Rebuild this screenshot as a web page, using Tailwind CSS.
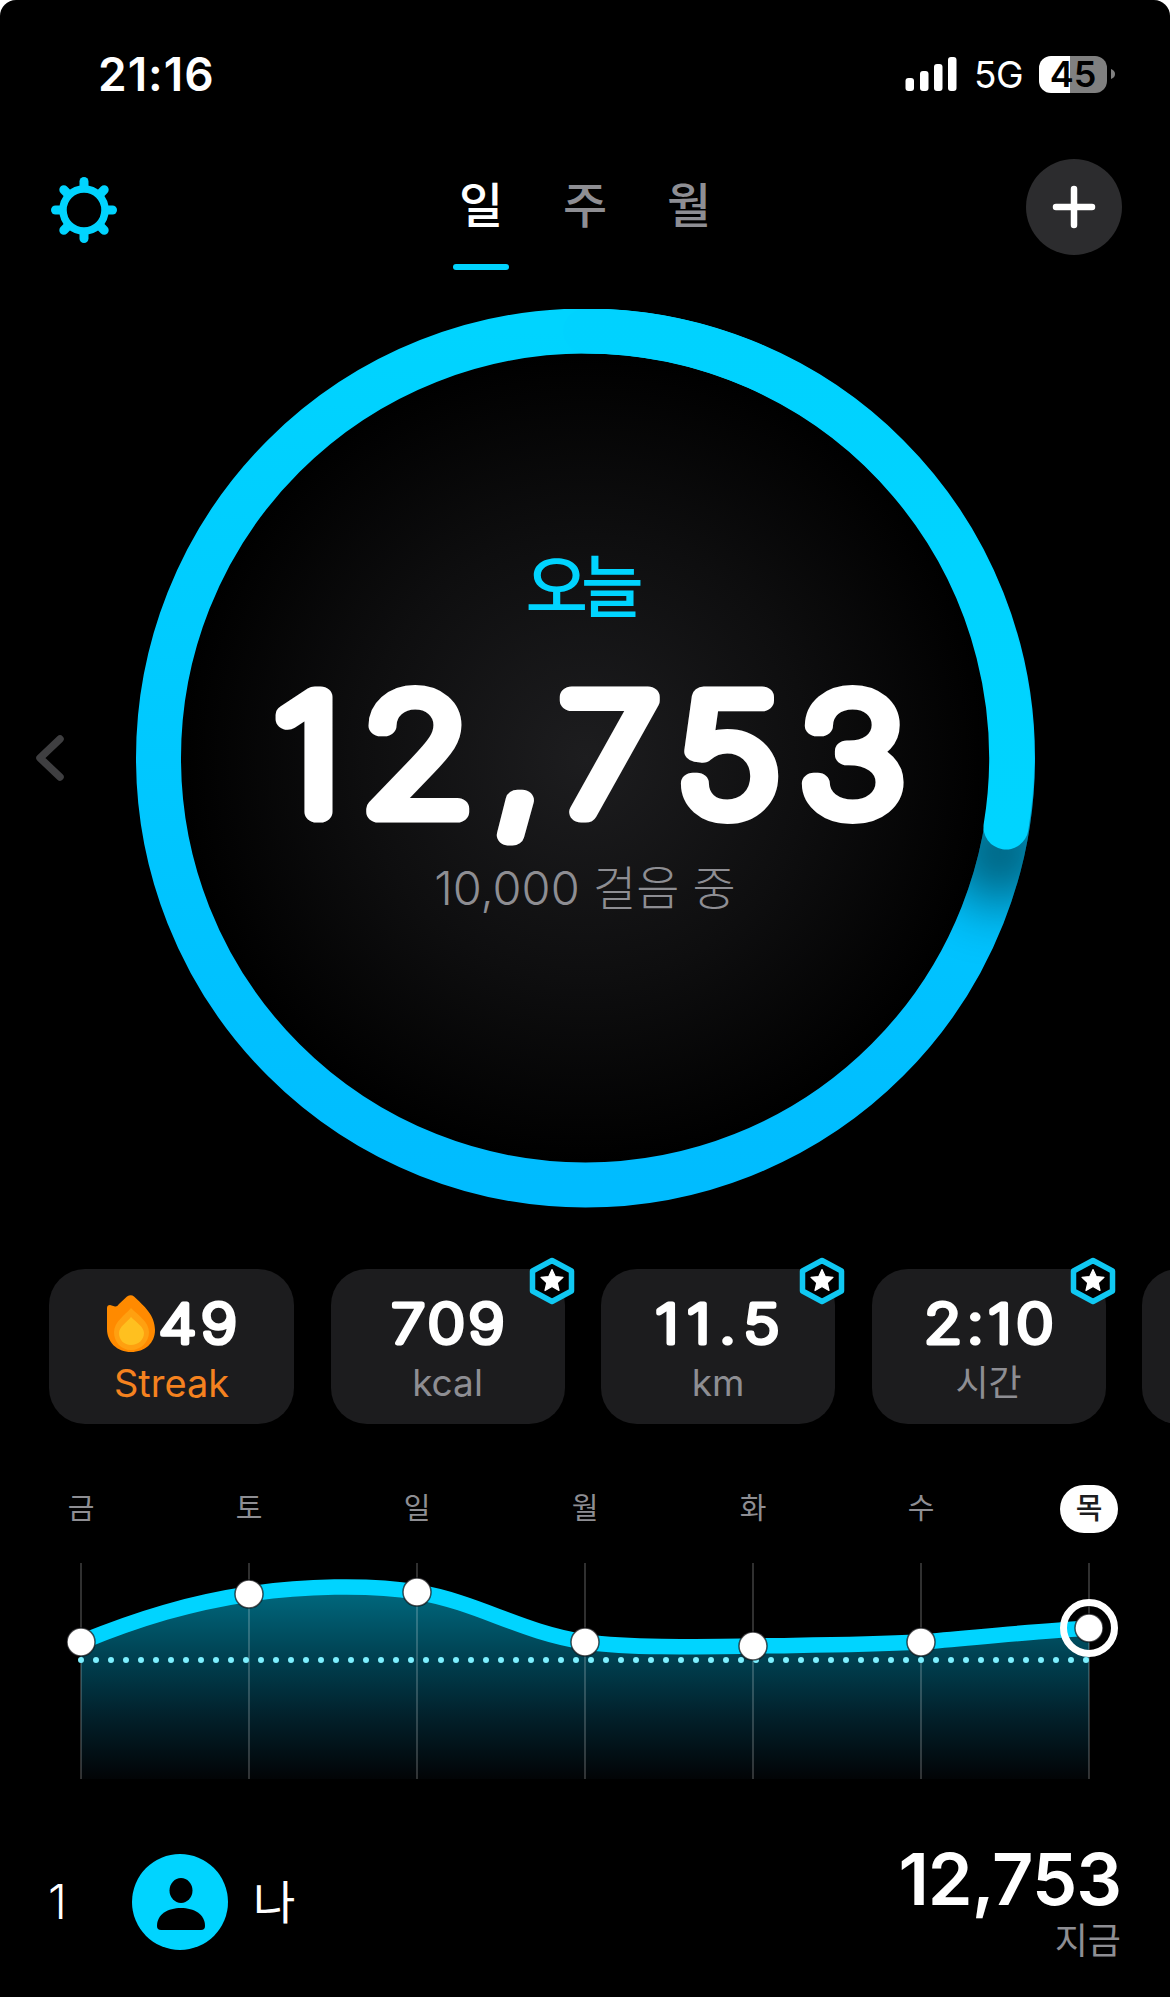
<!DOCTYPE html>
<html lang="ko">
<head>
<meta charset="utf-8">
<script src="https://cdn.jsdelivr.net/npm/@tailwindcss/browser@4"></script>
<title>걸음</title>
</head>
<body class="bg-white">
<div class="w-[1170px] h-[1997px] overflow-hidden bg-black text-white rounded-t-[16px] font-['Inter','Noto_Sans_CJK_KR',sans-serif]">

  <!-- status bar -->
  <div class="h-[148px] flex items-center justify-between pl-[98px] pr-[55px]">
    <div class="text-[46px] font-semibold leading-none tracking-[1px]">21:16</div>
    <div class="flex items-center">
      <svg class="w-[52px] h-[36px]" viewBox="907 56 52 36" fill="#fff">
        <rect x="907.5" y="78" width="8.5" height="13" rx="3"/>
        <rect x="922" y="71" width="8.5" height="20" rx="3"/>
        <rect x="936" y="64" width="8.5" height="27" rx="3"/>
        <rect x="950" y="57" width="8.5" height="34" rx="3"/>
      </svg>
      <div class="ml-[17px] w-[48px] text-[37px] leading-none font-normal tracking-[-0.5px]">5G</div>
      <div class="ml-[17px] w-[68px] h-[37px] rounded-[12px] bg-[linear-gradient(90deg,#fff_46%,#808080_46%)] text-black text-[36px] font-semibold leading-[37px] text-center">45</div>
      <svg class="ml-[4px] w-[4px] h-[10px]" viewBox="0 0 4 10" fill="#808080"><path d="M0 0C3 1 4 3 4 5C4 7 3 9 0 10Z"/></svg>
    </div>
  </div>

  <!-- header -->
  <div class="h-[124px] grid grid-cols-[1fr_auto_1fr] items-start">
    <svg class="ml-[50px] mt-[28px] w-[68px] h-[68px]" viewBox="-34 -34 68 68" fill="none" stroke="#00d4ff">
      <circle r="21" stroke-width="7.5"/>
      <g stroke-width="9" stroke-linecap="round">
        <path d="M0 -23V-28.5"/><path d="M0 23V28.5"/><path d="M-23 0H-28.5"/><path d="M23 0H28.5"/>
        <path d="M16.3 -16.3L20.2 -20.2"/><path d="M-16.3 -16.3L-20.2 -20.2"/><path d="M16.3 16.3L20.2 20.2"/><path d="M-16.3 16.3L-20.2 20.2"/>
      </g>
    </svg>
    <div class="flex mt-[28px] text-[48px] leading-[60px] font-medium text-[#8e8e93]">
      <div class="w-[104px] flex flex-col items-center text-white">
        <div>일</div>
        <div class="mt-[28px] w-[56px] h-[6px] rounded-full bg-[#00d4ff]"></div>
      </div>
      <div class="w-[104px] text-center">주</div>
      <div class="w-[104px] text-center">월</div>
    </div>
    <div class="justify-self-end mr-[48px] mt-[11px] w-[96px] h-[96px] rounded-full bg-[#2c2c2e] flex items-center justify-center">
      <svg class="w-[44px] h-[44px]" viewBox="0 0 44 44" stroke="#fff" stroke-width="6.5" stroke-linecap="round"><path d="M22 4V40M4 22H40"/></svg>
    </div>
  </div>

  <!-- ring -->
  <div class="relative h-[972px] flex items-center justify-center">
    <svg class="absolute left-[33px] top-1/2 -translate-y-1/2 w-[34px] h-[48px]" viewBox="0 0 34 48" fill="none" stroke="#3f3f41" stroke-width="7.5" stroke-linecap="round" stroke-linejoin="round"><path d="M27 5L7 24L27 43"/></svg>
    <div class="relative w-[899px] h-[899px] flex flex-col items-center">
      <svg class="absolute inset-0 w-full h-full" viewBox="136 309 899 899" fill="none">
        <defs>
          <linearGradient id="ringBase" x1="0" y1="0" x2="0" y2="1">
            <stop offset="0" stop-color="#00d4ff"/><stop offset="1" stop-color="#00bcff"/>
          </linearGradient>
          <linearGradient id="ringTop" gradientUnits="userSpaceOnUse" x1="585" y1="309" x2="585" y2="1207">
            <stop offset="0" stop-color="#00d2ff"/><stop offset="0.6" stop-color="#00d4ff"/>
          </linearGradient>
          <radialGradient id="centerGlow">
            <stop offset="0" stop-color="#1d1d1f"/><stop offset="0.55" stop-color="#0e0e0f"/><stop offset="1" stop-color="#000"/>
          </radialGradient>
          <mask id="ringMask" maskUnits="userSpaceOnUse" x="136" y="309" width="899" height="899">
            <circle cx="585.5" cy="758" r="427" stroke="#fff" stroke-width="45"/>
          </mask>
          <filter id="capShadow" x="-200%" y="-200%" width="500%" height="500%"><feGaussianBlur stdDeviation="30"/></filter>
        </defs>
        <circle cx="585.5" cy="758" r="405" fill="url(#centerGlow)"/>
        <circle cx="585.5" cy="758" r="427" stroke="url(#ringBase)" stroke-width="45"/>
        <g mask="url(#ringMask)">
          <circle cx="1000" cy="852" r="52" fill="#000" opacity="0.55" filter="url(#capShadow)"/>
        </g>
        <path d="M585.5 331A427 427 0 0 1 1006 827" stroke="url(#ringTop)" stroke-width="45" stroke-linecap="round"/>
      </svg>
      <div class="relative mt-[238px] h-[80px] pr-[8px] text-[68px] leading-[80px] font-medium text-[#00d4ff] tracking-[-7px]">오늘</div>
      <svg class="relative mt-[20px] block w-[899px] h-[200px] overflow-visible" viewBox="0 0 899 200">
        <text transform="translate(464 165) scale(1.14 1)" text-anchor="middle" font-size="158" font-weight="100" letter-spacing="18" fill="#fff" stroke="#fff" stroke-width="21" stroke-linejoin="round" stroke-linecap="round">12,753</text>
      </svg>
      <div class="relative mt-[11px] text-[47px] leading-[60px] font-light text-[#8e8e93]">10,000 걸음 중</div>
    </div>
  </div>

  <!-- stat cards -->
  <div class="pt-[25px] pl-[49px] flex gap-[36.5px]">
    <div class="shrink-0 w-[245px] h-[155px] rounded-[36px] bg-[#1c1c1e] flex flex-col items-center pt-[25px]">
      <div class="flex items-center h-[60px]">
        <svg class="w-[50px] h-[60px] mr-[5px] -mt-[2px]" viewBox="7 9 50 60">
          <path fill="#ff8a00" d="M8 24Q8 21 11 21L16 22.5Q18 23 20 20L28 12.5Q32 10 35 12.5C45 22 56 31 56 46C56 59 46 68 32 68C18 68 8 58 8 45Z"/>
          <path fill="#ffa010" d="M32 24C39 31 50 38 50 48C50 58 42 66 32 66C22 66 15 58 15 48C15 38 26 31 32 24Z"/>
          <path fill="#ffc01f" d="M32 33C37 38 45 43 45 49C45 56 39 61 32 61C25 61 20 56 20 49C20 43 28 38 32 33Z"/>
        </svg>
        <svg class="w-[76px] h-[60px] overflow-visible" viewBox="0 0 76 60"><text transform="translate(39 49) scale(1.14 1)" text-anchor="middle" font-size="54" font-weight="200" letter-spacing="4" fill="#fff" stroke="#fff" stroke-width="5" stroke-linejoin="round" stroke-linecap="round">49</text></svg>
      </div>
      <div class="mt-[7px] text-[38px] leading-[44px] text-[#f5821f]">Streak</div>
    </div>

    <div class="relative shrink-0 w-[234px] h-[155px] rounded-[36px] bg-[#1c1c1e] flex flex-col items-center pt-[25px]">
      <svg class="absolute -top-[12px] -right-[11px] w-[48px] h-[48px]" viewBox="0 0 48 48">
        <path fill="#000" stroke="#10c8f2" stroke-width="5.5" stroke-linejoin="round" d="M24 3.5L43.5 14V34L24 44.5L4.5 34V14Z"/>
        <path fill="#fff" stroke="#fff" stroke-width="1.2" stroke-linejoin="round" d="M24 12.5L27.2 19.55L35 20.3L29.2 25.7L31 33.5L24 29.5L17 33.5L18.8 25.7L13 20.3L20.8 19.55Z"/>
      </svg>
      <svg class="w-[234px] h-[60px] overflow-visible" viewBox="0 0 234 60"><text transform="translate(118.5 49) scale(1.14 1)" text-anchor="middle" font-size="54" font-weight="200" letter-spacing="3" fill="#fff" stroke="#fff" stroke-width="5" stroke-linejoin="round" stroke-linecap="round">709</text></svg>
      <div class="mt-[7px] text-[37px] leading-[44px] text-[#8e8e93]">kcal</div>
    </div>

    <div class="relative shrink-0 w-[234px] h-[155px] rounded-[36px] bg-[#1c1c1e] flex flex-col items-center pt-[25px]">
      <svg class="absolute -top-[12px] -right-[11px] w-[48px] h-[48px]" viewBox="0 0 48 48">
        <path fill="#000" stroke="#10c8f2" stroke-width="5.5" stroke-linejoin="round" d="M24 3.5L43.5 14V34L24 44.5L4.5 34V14Z"/>
        <path fill="#fff" stroke="#fff" stroke-width="1.2" stroke-linejoin="round" d="M24 12.5L27.2 19.55L35 20.3L29.2 25.7L31 33.5L24 29.5L17 33.5L18.8 25.7L13 20.3L20.8 19.55Z"/>
      </svg>
      <svg class="w-[234px] h-[60px] overflow-visible" viewBox="0 0 234 60"><text transform="translate(120.5 49) scale(1.14 1)" text-anchor="middle" font-size="54" font-weight="200" letter-spacing="7.5" fill="#fff" stroke="#fff" stroke-width="5" stroke-linejoin="round" stroke-linecap="round">11.5</text></svg>
      <div class="mt-[7px] text-[37px] leading-[44px] text-[#8e8e93]">km</div>
    </div>

    <div class="relative shrink-0 w-[234px] h-[155px] rounded-[36px] bg-[#1c1c1e] flex flex-col items-center pt-[25px]">
      <svg class="absolute -top-[12px] -right-[11px] w-[48px] h-[48px]" viewBox="0 0 48 48">
        <path fill="#000" stroke="#10c8f2" stroke-width="5.5" stroke-linejoin="round" d="M24 3.5L43.5 14V34L24 44.5L4.5 34V14Z"/>
        <path fill="#fff" stroke="#fff" stroke-width="1.2" stroke-linejoin="round" d="M24 12.5L27.2 19.55L35 20.3L29.2 25.7L31 33.5L24 29.5L17 33.5L18.8 25.7L13 20.3L20.8 19.55Z"/>
      </svg>
      <svg class="w-[234px] h-[60px] overflow-visible" viewBox="0 0 234 60"><text transform="translate(119 49) scale(1.14 1)" text-anchor="middle" font-size="54" font-weight="200" letter-spacing="4" fill="#fff" stroke="#fff" stroke-width="5" stroke-linejoin="round" stroke-linecap="round">2:10</text></svg>
      <div class="mt-[7px] text-[36px] leading-[44px] text-[#8e8e93]">시간</div>
    </div>

    <div class="shrink-0 w-[234px] h-[155px] rounded-[36px] bg-[#1c1c1e]"></div>
  </div>

  <!-- day labels -->
  <div class="mt-[61px] -ml-[3px] flex h-[48px] items-center text-[29px] leading-[48px] text-[#8e8e93]">
    <div class="shrink-0 w-[168px] text-center">금</div>
    <div class="shrink-0 w-[168px] text-center">토</div>
    <div class="shrink-0 w-[168px] text-center">일</div>
    <div class="shrink-0 w-[168px] text-center">월</div>
    <div class="shrink-0 w-[168px] text-center">화</div>
    <div class="shrink-0 w-[168px] text-center">수</div>
    <div class="shrink-0 w-[168px] flex justify-center"><div class="w-[58px] h-[48px] rounded-full bg-white text-center text-[#1c1c1e] font-medium">목</div></div>
  </div>

  <!-- chart -->
  <svg class="block w-[1170px] h-[257px]" viewBox="0 1533 1170 257" fill="none">
    <defs>
      <linearGradient id="areaFill" gradientUnits="userSpaceOnUse" x1="0" y1="1585" x2="0" y2="1779">
        <stop offset="0" stop-color="#006c82"/>
        <stop offset="0.4" stop-color="#003e4e"/>
        <stop offset="0.7" stop-color="#021e28"/>
        <stop offset="1" stop-color="#020406"/>
      </linearGradient>
    </defs>
    <path fill="url(#areaFill)" d="M81 1642C140 1618 190 1603 249 1594C300 1586 370 1584 417 1592C480 1603 520 1632 585 1642C630 1648 690 1647 753 1646C810 1645 860 1645 921 1642C980 1637 1040 1631 1089 1628V1779H81Z"/>
    <g stroke="#fff" stroke-opacity="0.25" stroke-width="1.5">
      <path d="M81 1563V1779M249 1563V1779M417 1563V1779M585 1563V1779M753 1563V1779M921 1563V1779M1089 1563V1779"/>
    </g>
    <path stroke="#7df0ff" stroke-width="6" stroke-linecap="round" stroke-dasharray="0 15" d="M81 1660H1089"/>
    <path stroke="#00d4ff" stroke-width="15.5" d="M81 1642C140 1618 190 1603 249 1594C300 1586 370 1584 417 1592C480 1603 520 1632 585 1642C630 1648 690 1647 753 1646C810 1645 860 1645 921 1642C980 1637 1040 1631 1089 1628"/>
    <g fill="#fff" stroke="#0c0c0e" stroke-opacity="0.7" stroke-width="1.5">
      <circle cx="81" cy="1642" r="14"/>
      <circle cx="249" cy="1594" r="14"/>
      <circle cx="417" cy="1592" r="14"/>
      <circle cx="585" cy="1642" r="14"/>
      <circle cx="753" cy="1646" r="14"/>
      <circle cx="921" cy="1642" r="14"/>
      <circle cx="1089" cy="1628" r="14"/>
    </g>
    <circle cx="1089" cy="1628" r="25.5" stroke="#fff" stroke-width="7"/>
  </svg>

  <!-- footer -->
  <div class="mt-[16px] h-[191px] flex items-center pl-[48px] pr-[49px]">
    <div class="w-[84px] text-[48px] leading-none font-light">1</div>
    <div class="w-[96px] h-[96px] rounded-full bg-[#00d4ff] flex items-center justify-center">
      <svg class="w-[96px] h-[96px]" viewBox="132 1854 96 96" fill="#000">
        <ellipse cx="181" cy="1890.5" rx="11.5" ry="12.5"/>
        <path d="M157 1926C157 1914 168 1908 181 1908C194 1908 205 1914 205 1926Q205 1930 201 1930H161Q157 1930 157 1926Z"/>
      </svg>
    </div>
    <div class="ml-[25px] text-[46px] leading-none">나</div>
    <div class="ml-auto flex flex-col items-end">
      <div class="text-[72px] leading-[80px] font-semibold tracking-[-1px]">12,753</div>
      <div class="mt-[-2px] text-[36px] leading-[48px] text-[#8e8e93]">지금</div>
    </div>
  </div>
</div>
</body>
</html>
